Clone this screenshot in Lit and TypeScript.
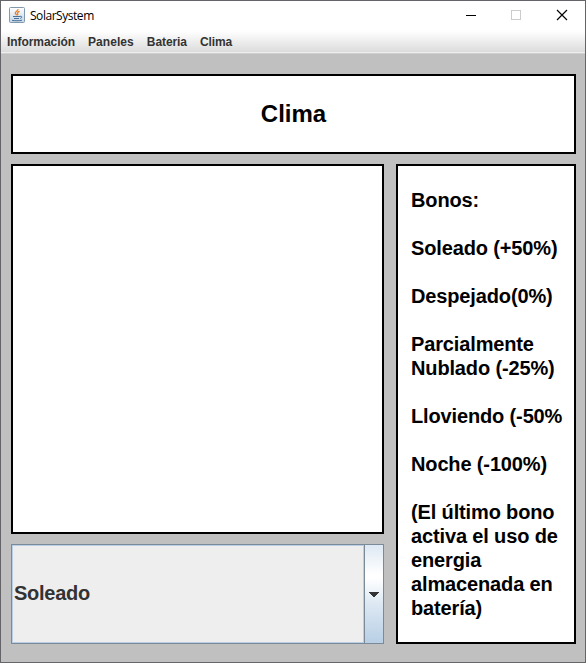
import { LitElement, html, css, svg } from "lit";
import { customElement, property, state } from "lit/decorators.js";

const javaCup = svg`
  <rect x="0.5" y="0.5" width="15" height="15" rx="1" fill="url(#tile)" stroke="#8199ad"/>
  <path d="M9 2.200C9.400 4 5.800 4.700 6.300 6.300c.2.700.9 1 1.300 1.900M10.600 4.300C8.800 5 8.100 5.700 8.600 6.600c.4.600.3 1.100-.3 1.600" fill="none" stroke="#ea7d22" stroke-width="1.300"/>
  <path d="M4 9.500h7M5 11.500h5M11 9.300c2.300-.5 2.400 1.500.2 2.200" fill="none" stroke="#47719a" stroke-width="1"/>
  <path d="M3 13.300c2 .6 7.800.6 10-.1" fill="none" stroke="#47719a" stroke-width="1"/>`;

@customElement("title-bar")
export class TitleBar extends LitElement {
  @property() caption = "";

  static styles = css`
    :host { display: flex; align-items: center; height: 30px; background: #fff; flex: none; }
    .icon { width: 16px; height: 16px; margin: -2px 0 0 8px; display: block; }
    .caption { font: 12px/16px "Open Sans", sans-serif; color: #000; margin-left: 5px; flex: 1; letter-spacing: -0.46px; }
    .controls { display: flex; height: 100%; align-items: center; margin-top: -2px; }
    .control { width: 46px; height: 28px; display: block; }
    .control:last-child { width: 45px; }
  `;

  render() {
    return html`
      <svg class="icon" viewBox="0 0 16 16">
        <defs><linearGradient id="tile" x1="0" y1="0" x2="0" y2="1">
          <stop offset="0" stop-color="#fff"/><stop offset="1" stop-color="#c3d6e5"/>
        </linearGradient></defs>
        ${javaCup}
      </svg>
      <div class="caption">${this.caption}</div>
      <div class="controls">
        <svg class="control" viewBox="0 0 46 28"><path d="M18 14.500h10" stroke="#000"/></svg>
        <svg class="control" viewBox="0 0 46 28"><rect x="17.500" y="9.500" width="9" height="9" fill="none" stroke="#ccc"/></svg>
        <svg class="control" viewBox="0 0 45 28"><path d="M17 9l10 10M27 9l-10 10" stroke="#000" stroke-width="1.150"/></svg>
      </div>`;
  }
}

@customElement("menu-bar")
export class MenuBar extends LitElement {
  @property({ attribute: false }) items: string[] = [];

  static styles = css`
    :host {
      display: flex; flex: none; box-sizing: border-box; height: 23px; gap: 13px;
      padding: 3px 6px 0; border-bottom: 1px solid #cfcfcf;
      background: linear-gradient(#eee, #eee) bottom / 100% 1px no-repeat, linear-gradient(#fff, #dadada);
    }
    .item { font: bold 12px/16px "Liberation Sans", Arial, sans-serif; color: #333; white-space: nowrap; }
    .item:first-child { letter-spacing: -0.06px; }
    .item:nth-child(2) { letter-spacing: 0.06px; }
    .item:nth-child(3) { letter-spacing: -0.08px; }
    .item:last-child { letter-spacing: -0.1px; }
  `;

  render() {
    return this.items.map((item) => html`<div class="item">${item}</div>`);
  }
}

@customElement("combo-box")
export class ComboBox extends LitElement {
  @property() value = "";

  static styles = css`
    :host { display: flex; box-sizing: border-box; border: 1px solid #7a8a99; background: #eee; }
    .value {
      flex: 1; display: flex; align-items: center; box-sizing: border-box; padding: 0 0 2px 1px;
      border: 1px solid #b8cfe5; font: bold 20px/24px "Liberation Sans", Arial, sans-serif; color: #333;
      letter-spacing: -0.26px;
    }
    .arrow {
      width: 18px; display: flex; align-items: center; justify-content: center;
      border-left: 1px solid #7a8a99;
      background: linear-gradient(#dde8f3 0%, #fff 30%, #fff 34%, #dde8f3 60%, #b8cfe5 100%);
    }
    .arrow svg { display: block; width: 10px; height: 5px; margin-top: 1px; }
  `;

  render() {
    return html`
      <div class="value">${this.value}</div>
      <div class="arrow">
        <svg viewBox="0 0 10 5" shape-rendering="crispEdges"><path d="M0 0h10v1h-1v1h-1v1h-1v1h-1v1h-2v-1h-1v-1h-1v-1h-1v-1h-1z" fill="#333"/></svg>
      </div>`;
  }
}

@customElement("app-root")
export class AppRoot extends LitElement {
  @state() private weather = "Soleado";

  private menus = ["Información", "Paneles", "Bateria", "Clima"];

  private bonuses = [
    ["Bonos:"],
    ["Soleado (+50%)"],
    ["Despejado(0%)"],
    ["Parcialmente", "Nublado (-25%)"],
    ["Lloviendo (-50%"],
    ["Noche (-100%)"],
    ["(El último bono", "activa el uso de", "energia", "almacenada en", "batería)"],
  ];

  static styles = css`
    :host {
      display: flex; flex-direction: column; box-sizing: border-box; width: 586px; height: 663px;
      border: 1px solid #646469; background: #c0c0c0; overflow: hidden;
      font-family: "Liberation Sans", Arial, sans-serif;
    }
    .content {
      flex: 1; min-height: 0; display: grid; box-sizing: border-box;
      grid-template-columns: 373px 180px; grid-template-rows: 80px 370px 100px;
      column-gap: 12px; row-gap: 10px; padding: 20px 9px 18px 10px;
    }
    .panel { box-sizing: border-box; border: 2px solid #000; background: #fff; }
    .heading {
      grid-column: 1 / -1; margin: 0; display: flex; align-items: center; justify-content: center;
      font-size: 24px; line-height: 28px; font-weight: bold; color: #000;
    }
    .bonuses {
      grid-column: 2; grid-row: 2 / 4; display: flex; flex-direction: column; gap: 24px;
      padding: 22px 0 0 13px; font-size: 20px; line-height: 24px; font-weight: bold;
      color: #000; white-space: nowrap; letter-spacing: -0.14px;
    }
  `;

  render() {
    return html`
      <title-bar .caption=${"SolarSystem"}></title-bar>
      <menu-bar .items=${this.menus}></menu-bar>
      <main class="content">
        <h1 class="panel heading">Clima</h1>
        <div class="panel"></div>
        <div class="panel bonuses">
          ${this.bonuses.map((lines) => html`<div>${lines.map((line) => html`<div>${line}</div>`)}</div>`)}
        </div>
        <combo-box .value=${this.weather}></combo-box>
      </main>`;
  }
}
